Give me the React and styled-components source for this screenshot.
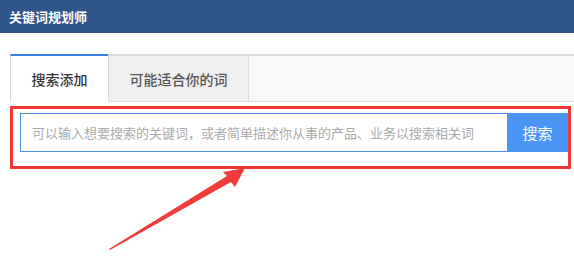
import React, { useState } from "react";
import styled, { createGlobalStyle } from "styled-components";

const GlobalStyle = createGlobalStyle`
  html, body {
    margin: 0;
    padding: 0;
    background: #fff;
    font-family: "Liberation Sans", "Noto Sans CJK SC", sans-serif;
  }
`;

const TABS = ["搜索添加", "可能适合你的词"];

const App = () => {
  const [active, setActive] = useState(0);
  return (
    <Page>
      <GlobalStyle />
      <Header>
        <Title>关键词规划师</Title>
      </Header>
      <Main>
        <TabBar>
          {TABS.map((t, i) => (
            <Tab key={t} active={i === active} wide={i === 1} onClick={() => setActive(i)}>
              {t}
            </Tab>
          ))}
        </TabBar>
        <SearchArea>
          <SearchRow>
            <Input placeholder="可以输入想要搜索的关键词，或者简单描述你从事的产品、业务以搜索相关词" />
            <Button>搜索</Button>
          </SearchRow>
          <Highlight />
        </SearchArea>
        {/* annotation arrow */}
        <Arrow viewBox="0 0 150 90" width="150" height="90">
          <polygon points="1,81 119,8 115,4 137,0 127,19 123,14 2,82" fill="#f23b3b" />
        </Arrow>
      </Main>
    </Page>
  );
};

export default App;

const Page = styled.div`
  width: 574px;
  height: 263px;
  overflow: hidden;
`;

const Header = styled.div`
  height: 33px;
  background-color: #2f5489;
  display: flex;
  align-items: center;
  padding-left: 9px;
`;

const Title = styled.h1`
  margin: 0;
  color: #fff;
  font-size: 13px;
  font-weight: 700;
  font-family: "Noto Sans CJK SC", sans-serif;
`;

const Main = styled.div`
  position: relative;
  padding: 21px 0 0 10px;
`;

const TabBar = styled.div`
  display: flex;
  height: 45px;
  background-color: #f8f8f8;
  border-top: 2px solid #dcdcdc;
  border-bottom: 1px solid #dcdcdc;
`;

const Tab = styled.div`
  box-sizing: border-box;
  width: ${(p) => (p.wide ? "141px" : "98px")};
  margin-top: ${(p) => (p.active ? "-2px" : "0")};
  margin-bottom: ${(p) => (p.active ? "-1px" : "0")};
  border-top: ${(p) => (p.active ? "2px solid #3b7ee0" : "none")};
  border-left: 1px solid #dcdcdc;
  border-right: ${(p) => (p.active ? "none" : "1px solid #dcdcdc")};
  background-color: ${(p) => (p.active ? "#fff" : "#f0f0f0")};
  color: ${(p) => (p.active ? "#333" : "#555")};
  display: flex;
  align-items: center;
  justify-content: center;
  font-family: "Noto Sans CJK SC", sans-serif;
  font-size: 14px;
  font-weight: 500;
  cursor: pointer;
`;

const SearchArea = styled.div`
  position: relative;
  padding: 11px 6px 0 10px;
`;

const SearchRow = styled.div`
  display: flex;
  height: 39px;
`;

const Input = styled.input`
  box-sizing: border-box;
  width: 487px;
  height: 39px;
  border: 1px solid #4a8fe6;
  border-right: none;
  padding: 0 11px;
  font-family: "Noto Sans CJK SC", sans-serif;
  font-size: 13px;
  color: #333;
  outline: none;
  &::placeholder {
    color: #aaa;
  }
`;

const Button = styled.button`
  width: 61px;
  height: 39px;
  border: none;
  background-color: #4a95f5;
  color: #fff;
  font-family: "Noto Sans CJK SC", sans-serif;
  font-size: 15px;
  padding: 0;
  cursor: pointer;
`;

const Highlight = styled.div`
  position: absolute;
  left: 0;
  top: 4px;
  width: 561px;
  height: 63px;
  box-sizing: border-box;
  border: 3px solid #f33636;
  pointer-events: none;
`;

const Arrow = styled.svg`
  position: absolute;
  left: 108px;
  top: 135px;
`;
